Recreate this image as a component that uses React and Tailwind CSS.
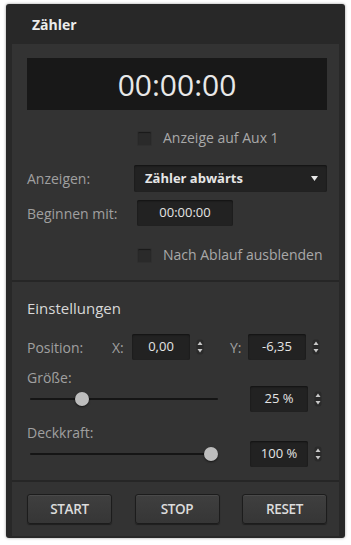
import React from 'react'

const font = { fontFamily: '"Open Sans", "Liberation Sans", sans-serif' }

function Checkbox({ label }) {
  return (
    <div className="flex items-center h-[16px]">
      <div className="w-[110px]" />
      <div className="w-[15px] h-[15px] rounded-[2px] bg-[#2a2a2a] border border-[#2f2f2f] shadow-[inset_0_1px_1px_rgba(0,0,0,0.4)]" />
      <span className="ml-[11px] text-[14px] text-[#a9a9a9] leading-none">{label}</span>
    </div>
  )
}

function Stepper() {
  return (
    <svg width="8" height="16" viewBox="0 0 8 16" className="shrink-0">
      <rect x="0.5" y="0.5" width="7" height="15" rx="3" fill="#2a2a2a" />
      <path d="M4 2.5 L6.5 6 L1.5 6 Z" fill="#c8c8c8" />
      <path d="M4 13.5 L6.5 10 L1.5 10 Z" fill="#c8c8c8" />
    </svg>
  )
}

function NumField({ value, w = 'w-[58px]' }) {
  return (
    <div className={`${w} h-[26px] rounded-[2px] bg-[#222] flex items-center justify-center text-[13px] text-[#e4e4e4] shadow-[inset_0_1px_2px_rgba(0,0,0,0.5)]`}>
      {value}
    </div>
  )
}

function Slider({ pos }) {
  return (
    <div className="relative w-[188px] ml-[3px] h-[16px] flex items-center">
      <div className="w-full h-[2px] bg-[#151515] rounded-full" />
      <div
        className="absolute top-1/2 w-[14px] h-[14px] -mt-[7px] -ml-[7px] rounded-full bg-[#bdbdbd] shadow-[0_1px_2px_rgba(0,0,0,0.6)]"
        style={{ left: pos }}
      />
    </div>
  )
}

function Button({ children }) {
  return (
    <button className="w-[85px] h-[30px] rounded-[3px] border border-[#1c1c1c] bg-gradient-to-b from-[#3f3f3f] to-[#363636] shadow-[inset_0_1px_0_rgba(255,255,255,0.06),0_1px_1px_rgba(0,0,0,0.4)] text-[13.5px] font-semibold text-[#dcdcdc] tracking-tight">
      {children}
    </button>
  )
}

export default function App() {
  return (
    <div className="w-[351px] h-[545px] bg-white pt-[4px] pl-[6px]" style={font}>
      <div className="w-[339px] h-[534px] bg-[#282828] rounded-[3px] flex flex-col shadow-[0_0_3px_rgba(0,0,0,0.4)]">
        <div className="h-[40px] flex items-center pl-[26px] text-[14px] font-bold text-[#ececec]">
          Zähler
        </div>
        <div className="mx-[6px] flex-1 bg-[#333] flex flex-col mb-[2px]">
          <div className="pl-[15px] pr-[12px] pt-[14px] h-[238px] flex flex-col border-b-2 border-[#262626]">
            <div className="h-[52px] bg-[#181818] flex items-center justify-center text-[30px] text-[#e8e8e8]">
              00:00:00
            </div>
            <div className="mt-[20px]">
              <Checkbox label="Anzeige auf Aux 1" />
            </div>
            <div className="mt-[19px] flex items-center h-[27px]">
              <span className="w-[107px] text-[14px] text-[#a0a0a0]">Anzeigen:</span>
              <div className="flex-1 h-[27px] bg-[#222] rounded-[2px] flex items-center justify-between pl-[11px] pr-[9px] shadow-[inset_0_1px_2px_rgba(0,0,0,0.5)]">
                <span className="text-[13px] font-bold text-[#e6e6e6]">Zähler abwärts</span>
                <svg width="7" height="5" viewBox="0 0 7 5">
                  <path d="M0 0 L7 0 L3.5 5 Z" fill="#e8e8e8" />
                </svg>
              </div>
            </div>
            <div className="mt-[8px] flex items-center h-[26px]">
              <span className="w-[110px] text-[14px] text-[#a0a0a0]">Beginnen mit:</span>
              <div className="w-[96px] h-[26px] bg-[#222] rounded-[2px] flex items-center justify-center text-[13px] text-[#e4e4e4] shadow-[inset_0_1px_2px_rgba(0,0,0,0.5)]">
                00:00:00
              </div>
            </div>
            <div className="mt-[21px]">
              <Checkbox label="Nach Ablauf ausblenden" />
            </div>
          </div>

          <div className="pl-[15px] pr-[12px] h-[200px] flex flex-col border-b-2 border-[#262626]">
            <div className="mt-[16px] h-[20px] flex items-center text-[15px] text-[#d8d8d8]">Einstellungen</div>
            <div className="mt-[16px] flex items-center h-[26px]">
              <span className="w-[85px] text-[14px] text-[#a0a0a0]">Position:</span>
              <span className="w-[20px] text-[14px] text-[#a0a0a0]">X:</span>
              <NumField value="0,00" />
              <div className="ml-[6px]"><Stepper /></div>
              <span className="ml-[26px] w-[18px] text-[14px] text-[#a0a0a0]">Y:</span>
              <NumField value="-6,35" />
              <div className="ml-[6px]"><Stepper /></div>
            </div>
            <div className="mt-[9px] h-[16px] flex items-center text-[14px] text-[#a0a0a0]">Größe:</div>
            <div className="flex items-center h-[27px]">
              <Slider pos={52} />
              <div className="ml-[32px]"><NumField value="25 %" /></div>
              <div className="ml-[6px]"><Stepper /></div>
            </div>
            <div className="mt-[12px] h-[16px] flex items-center text-[14px] text-[#a0a0a0]">Deckkraft:</div>
            <div className="flex items-center h-[27px]">
              <Slider pos={181} />
              <div className="ml-[32px]"><NumField value="100 %" /></div>
              <div className="ml-[6px]"><Stepper /></div>
            </div>
          </div>

          <div className="flex-1 pl-[15px] pr-[12px] flex items-center justify-between">
            <Button>START</Button>
            <Button>STOP</Button>
            <Button>RESET</Button>
          </div>
        </div>
      </div>
    </div>
  )
}
